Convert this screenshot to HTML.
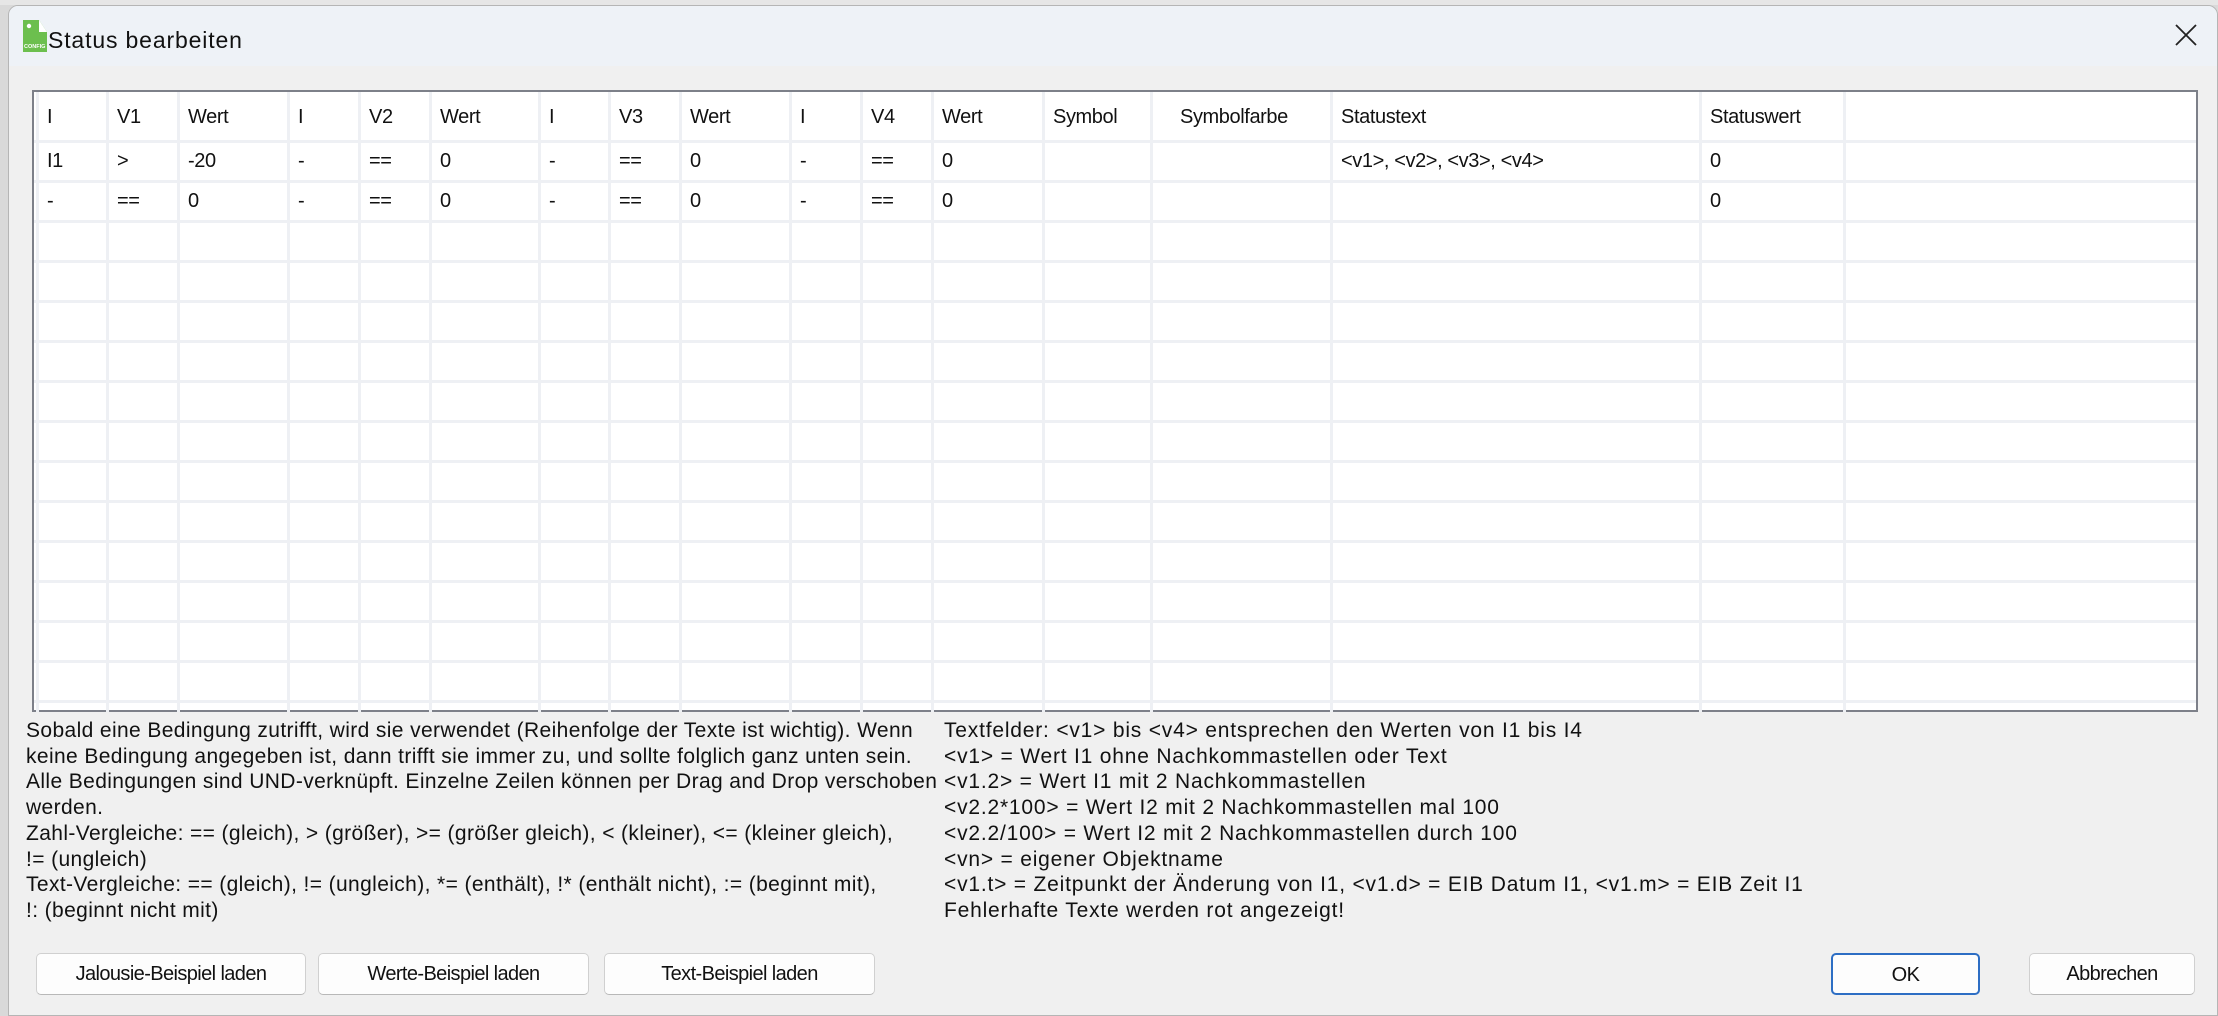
<!DOCTYPE html>
<html><head><meta charset="utf-8">
<style>
*{margin:0;padding:0;box-sizing:border-box}
body{width:2218px;height:1016px;overflow:hidden;background:#d9d9d9;font-family:"Liberation Sans",sans-serif;position:relative}
.win{position:absolute;left:8px;top:5px;width:2210px;height:1011px;background:#f0f0f0;border:1px solid #b5b5b5;border-radius:10px 10px 0 0;overflow:hidden}
.tb{position:absolute;left:0;top:0;width:100%;height:60px;background:#eef2f7}
.t{position:absolute;white-space:nowrap;color:#111;font-size:20px;letter-spacing:-0.6px}
.tbl{position:absolute;left:23px;top:84px;width:2166px;height:622px;background:#fff;border:2px solid #7d8089}
.vl{position:absolute;top:0;width:3px;height:620px;background:#eef0f4}
.hl{position:absolute;left:0;width:2162px;height:3px;background:#eef0f4}
.c{position:absolute;font-size:20px;color:#111;white-space:nowrap;letter-spacing:-0.4px}
.btn{position:absolute;height:42px;background:#fdfdfd;border:1px solid #d0d0d0;border-bottom-color:#b8b8b8;border-radius:5px;font-size:20px;letter-spacing:-0.6px;text-align:center;line-height:40px;color:#111}
.txt{position:absolute;font-size:21px;line-height:25.7px;color:#111;letter-spacing:0.38px;white-space:nowrap}
</style></head><body>
<div style="position:absolute;left:0;top:0;width:2218px;height:5px;background:#e6e6e6"></div>
<div class="win">
<div class="tb"></div>
<svg style="position:absolute;left:14px;top:14px" width="24" height="32" viewBox="0 0 24 32">
<path d="M0 0H16L24 12V32H0Z" fill="#6cbf4e"/>
<path d="M16 0L24 12H16Z" fill="#fff"/>
<circle cx="6" cy="6" r="2.2" fill="#fff"/>
<text x="1" y="28" font-size="5.5" fill="#fff" font-family="Liberation Sans" font-weight="bold">CONFIG</text>
</svg>
<div class="t" style="left:39px;top:21px;font-size:23px;letter-spacing:0.85px">Status bearbeiten</div>
<svg style="position:absolute;left:2166px;top:18px" width="22" height="22"><path d="M1 1L21 21M21 1L1 21" stroke="#222" stroke-width="1.8"/></svg>

<div class="tbl">
<div class="hl" style="top:48px"></div><div class="hl" style="top:88px"></div><div class="hl" style="top:128px"></div><div class="hl" style="top:168px"></div><div class="hl" style="top:208px"></div><div class="hl" style="top:248px"></div><div class="hl" style="top:288px"></div><div class="hl" style="top:328px"></div><div class="hl" style="top:368px"></div><div class="hl" style="top:408px"></div><div class="hl" style="top:448px"></div><div class="hl" style="top:488px"></div><div class="hl" style="top:528px"></div><div class="hl" style="top:568px"></div><div class="hl" style="top:608px"></div>
<div class="vl" style="left:2px"></div>
<div class="vl" style="left:72px"></div><div class="vl" style="left:143px"></div><div class="vl" style="left:253px"></div><div class="vl" style="left:324px"></div><div class="vl" style="left:395px"></div><div class="vl" style="left:504px"></div><div class="vl" style="left:574px"></div><div class="vl" style="left:645px"></div><div class="vl" style="left:755px"></div><div class="vl" style="left:826px"></div><div class="vl" style="left:897px"></div><div class="vl" style="left:1008px"></div><div class="vl" style="left:1116px"></div><div class="vl" style="left:1296px"></div><div class="vl" style="left:1665px"></div><div class="vl" style="left:1809px"></div>
<div class="c" style="left:13px;top:14px">I</div><div class="c" style="left:83px;top:14px">V1</div><div class="c" style="left:154px;top:14px">Wert</div><div class="c" style="left:264px;top:14px">I</div><div class="c" style="left:335px;top:14px">V2</div><div class="c" style="left:406px;top:14px">Wert</div><div class="c" style="left:515px;top:14px">I</div><div class="c" style="left:585px;top:14px">V3</div><div class="c" style="left:656px;top:14px">Wert</div><div class="c" style="left:766px;top:14px">I</div><div class="c" style="left:837px;top:14px">V4</div><div class="c" style="left:908px;top:14px">Wert</div><div class="c" style="left:1019px;top:14px">Symbol</div><div class="c" style="left:1146px;top:14px">Symbolfarbe</div><div class="c" style="left:1307px;top:14px">Statustext</div><div class="c" style="left:1676px;top:14px">Statuswert</div>
<div class="c" style="left:13px;top:58px">I1</div><div class="c" style="left:83px;top:58px">&gt;</div><div class="c" style="left:154px;top:58px">-20</div><div class="c" style="left:264px;top:58px">-</div><div class="c" style="left:335px;top:58px">==</div><div class="c" style="left:406px;top:58px">0</div><div class="c" style="left:515px;top:58px">-</div><div class="c" style="left:585px;top:58px">==</div><div class="c" style="left:656px;top:58px">0</div><div class="c" style="left:766px;top:58px">-</div><div class="c" style="left:837px;top:58px">==</div><div class="c" style="left:908px;top:58px">0</div><div class="c" style="left:1307px;top:58px">&lt;v1&gt;, &lt;v2&gt;, &lt;v3&gt;, &lt;v4&gt;</div><div class="c" style="left:1676px;top:58px">0</div>
<div class="c" style="left:13px;top:98px">-</div><div class="c" style="left:83px;top:98px">==</div><div class="c" style="left:154px;top:98px">0</div><div class="c" style="left:264px;top:98px">-</div><div class="c" style="left:335px;top:98px">==</div><div class="c" style="left:406px;top:98px">0</div><div class="c" style="left:515px;top:98px">-</div><div class="c" style="left:585px;top:98px">==</div><div class="c" style="left:656px;top:98px">0</div><div class="c" style="left:766px;top:98px">-</div><div class="c" style="left:837px;top:98px">==</div><div class="c" style="left:908px;top:98px">0</div><div class="c" style="left:1676px;top:98px">0</div>
</div>

<div class="txt" style="left:17px;top:712px">Sobald eine Bedingung zutrifft, wird sie verwendet (Reihenfolge der Texte ist wichtig). Wenn<br>keine Bedingung angegeben ist, dann trifft sie immer zu, und sollte folglich ganz unten sein.<br>Alle Bedingungen sind UND-verknüpft. Einzelne Zeilen können per Drag and Drop verschoben<br>werden.<br>Zahl-Vergleiche: == (gleich), &gt; (größer), &gt;= (größer gleich), &lt; (kleiner), &lt;= (kleiner gleich),<br>!= (ungleich)<br>Text-Vergleiche: == (gleich), != (ungleich), *= (enthält), !* (enthält nicht), := (beginnt mit),<br>!: (beginnt nicht mit)</div>
<div class="txt" style="left:935px;top:712px;letter-spacing:0.8px">Textfelder: &lt;v1&gt; bis &lt;v4&gt; entsprechen den Werten von I1 bis I4<br>&lt;v1&gt; = Wert I1 ohne Nachkommastellen oder Text<br>&lt;v1.2&gt; = Wert I1 mit 2 Nachkommastellen<br>&lt;v2.2*100&gt; = Wert I2 mit 2 Nachkommastellen mal 100<br>&lt;v2.2/100&gt; = Wert I2 mit 2 Nachkommastellen durch 100<br>&lt;vn&gt; = eigener Objektname<br>&lt;v1.t&gt; = Zeitpunkt der Änderung von I1, &lt;v1.d&gt; = EIB Datum I1, &lt;v1.m&gt; = EIB Zeit I1<br>Fehlerhafte Texte werden rot angezeigt!</div>

<div class="btn" style="left:27px;top:947px;width:270px">Jalousie-Beispiel laden</div>
<div class="btn" style="left:309px;top:947px;width:271px">Werte-Beispiel laden</div>
<div class="btn" style="left:595px;top:947px;width:271px">Text-Beispiel laden</div>
<div class="btn" style="left:1822px;top:947px;width:149px;border:2px solid #2d6ec4">OK</div>
<div class="btn" style="left:2020px;top:947px;width:166px">Abbrechen</div>
</div>
</body></html>
